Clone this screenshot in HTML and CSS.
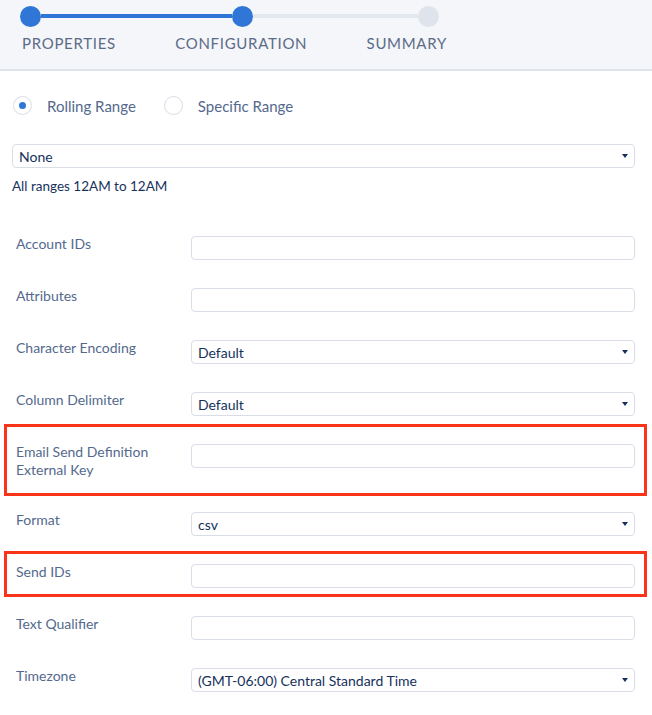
FILE: index.html
```html
<!DOCTYPE html>
<html>
<head>
<meta charset="utf-8">
<link rel="stylesheet" href="styles.css">
</head>
<body>
<div class="header">
  <div class="track">
    <span class="dot done"></span><span class="seg seg-a"></span><span class="dot done"></span><span class="seg seg-b"></span><span class="dot"></span>
  </div>
  <div class="steps"><span>PROPERTIES</span><span>CONFIGURATION</span><span>SUMMARY</span></div>
</div>
<div class="main">
  <div class="radios">
    <label class="radio"><span class="circle on"></span><span class="rlabel">Rolling Range</span></label>
    <label class="radio"><span class="circle"></span><span class="rlabel">Specific Range</span></label>
  </div>
  <div class="select wide"><span>None</span><span class="caret"></span></div>
  <div class="note">All ranges 12AM to 12AM</div>
  <div class="form">
    <div class="row"><div class="label">Account IDs</div><div class="input"></div></div>
    <div class="row"><div class="label">Attributes</div><div class="input"></div></div>
    <div class="row"><div class="label">Character Encoding</div><div class="input select"><span>Default</span><span class="caret"></span></div></div>
    <div class="row"><div class="label">Column Delimiter</div><div class="input select"><span>Default</span><span class="caret"></span></div></div>
    <div class="row flag flag-email"><div class="label">Email Send Definition External Key</div><div class="input"></div></div>
    <div class="row"><div class="label">Format</div><div class="input select"><span>csv</span><span class="caret"></span></div></div>
    <div class="row flag flag-send"><div class="label">Send IDs</div><div class="input"></div></div>
    <div class="row"><div class="label">Text Qualifier</div><div class="input"></div></div>
    <div class="row"><div class="label">Timezone</div><div class="input select"><span>(GMT-06:00) Central Standard Time</span><span class="caret"></span></div></div>
  </div>
</div>
</body>
</html>
```
FILE: styles.css
```css
html, body {
  margin: 0;
  padding: 0;
  background: #ffffff;
  font-family: Lato, "Open Sans", "Liberation Sans", sans-serif;
  color: #54698d;
}

.header {
  box-sizing: border-box;
  height: 71px;
  padding: 5px 0 0 20px;
  background: #f4f6f9;
  border-bottom: 2px solid #dfe3ea;
}

.track {
  display: flex;
  align-items: center;
  height: 22px;
}

.dot {
  width: 21px;
  height: 21px;
  border-radius: 50%;
  background: #dfe4ec;
  flex: none;
}

.dot.done {
  background: #2f76d6;
}

.seg {
  height: 4px;
  background: #e3e7ee;
  flex: none;
}

.seg-a {
  width: 191px;
  background: #2f76d6;
}

.seg-b {
  width: 165px;
}

.steps {
  display: flex;
  justify-content: space-between;
  width: 425px;
  margin: 7px 0 0 2px;
  font-size: 15px;
  line-height: 18px;
  letter-spacing: 0.7px;
  color: #5b6b88;
}

.main {
  padding: 0 17px 0 12px;
}

.radios {
  display: flex;
  align-items: center;
  height: 19px;
  margin: 25px 0 0 1px;
}

.radio {
  display: flex;
  align-items: center;
  margin-right: 28px;
}

.circle {
  box-sizing: border-box;
  width: 19px;
  height: 19px;
  border: 1px solid #d8dde6;
  border-radius: 50%;
  background: #fff;
  display: flex;
  align-items: center;
  justify-content: center;
}

.circle.on::after {
  content: "";
  width: 7px;
  height: 7px;
  border-radius: 50%;
  background: #2f76d6;
}

.rlabel {
  margin-left: 15px;
  font-size: 15px;
  color: #54698d;
}

.select,
.input {
  box-sizing: border-box;
  height: 24px;
  border: 1px solid #d8dde6;
  border-radius: 4px;
  background: #fff;
}

.select {
  display: flex;
  align-items: center;
  justify-content: space-between;
  padding: 0 6px 0 6px;
  font-size: 14px;
  color: #16325c;
}

.wide {
  margin-top: 29px;
}

.caret {
  width: 0;
  height: 0;
  border-left: 3.5px solid transparent;
  border-right: 3.5px solid transparent;
  border-top: 4px solid #16325c;
}

.note {
  margin-top: 9px;
  font-size: 13.5px;
  line-height: 18px;
  color: #16325c;
}

.form {
  display: flex;
  flex-direction: column;
  gap: 27px;
  margin-top: 40px;
}

.row {
  display: flex;
  align-items: flex-start;
  padding-left: 4px;
}

.label {
  box-sizing: border-box;
  width: 175px;
  flex: none;
  padding-right: 12px;
  font-size: 14px;
  line-height: 18px;
  color: #54698d;
}

.input {
  flex: 1;
  margin-top: 1px;
}

.flag {
  position: relative;
}

.flag::after {
  content: "";
  position: absolute;
  left: -8px;
  right: -12px;
  border: 3px solid #f93418;
  pointer-events: none;
}

.flag-email {
  padding-bottom: 5px;
}

.flag-email::after {
  top: -19px;
  bottom: -12px;
}

.flag-send::after {
  top: -12px;
  bottom: -9px;
}
```
